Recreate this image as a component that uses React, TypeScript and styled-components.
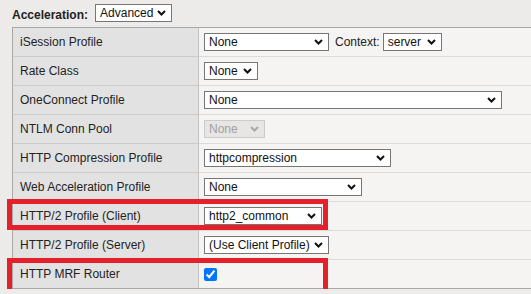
import styled, { createGlobalStyle } from "styled-components";

const GlobalStyle = createGlobalStyle`
  * { box-sizing: border-box; }
  body {
    margin: 0;
    background: #ecebea;
    font-family: "Liberation Sans", Arial, sans-serif;
    font-size: 12px;
    color: #222;
    overflow: hidden;
  }
`

const Page = styled.div`
  padding: 4px 0 0 12px;
  width: 600px;
`

const Header = styled.div`
  display: flex;
  align-items: flex-end;
  gap: 7px;
  height: 18px;
  margin-bottom: 5px;
`

const HeaderLabel = styled.span`
  font-weight: bold;
  line-height: 14px;
`

const Table = styled.div`
  border: 1px solid #a8a8a8;
  border-right: none;
  width: 580px;
`

const Row = styled.div`
  position: relative;
  display: grid;
  grid-template-columns: 186px 1fr;
  height: 29px;

  &:last-child {
    height: 28px;
  }
  &:last-child > div {
    border-bottom: none;
  }
`

const LabelCell = styled.div`
  display: flex;
  align-items: center;
  padding-left: 7px;
  background: #e2e2e2;
  border-right: 1px solid #c2c2c2;
  border-bottom: 1px solid #cbcbcb;
`

const ValueCell = styled.div`
  display: flex;
  align-items: center;
  padding-left: 5px;
  background: #f5f4f2;
  border-bottom: 1px solid #dcdbd9;
`

const SelectBox = styled.span<{ $width: number; $disabled?: boolean }>`
  display: inline-flex;
  align-items: center;
  justify-content: space-between;
  width: ${p => p.$width}px;
  height: 18px;
  padding: 0 5px 0 4px;
  background: ${p => (p.$disabled ? "#e7e6e5" : "#fff")};
  border: 1px solid ${p => (p.$disabled ? "#cbcbcb" : "#767676")};
  color: ${p => (p.$disabled ? "#a0a0a0" : "#111")};
  line-height: 14px;
  white-space: nowrap;
  overflow: hidden;

  svg {
    flex: none;
    stroke: ${p => (p.$disabled ? "#a8a8a8" : "#111")};
  }
`

const ContextLabel = styled.span`
  margin: 0 3px 0 6px;
`

const CheckBox = styled.input`
  margin: 0;
  width: 13px;
  height: 13px;
`

const Highlight = styled.div<{ $top: number }>`
  position: absolute;
  left: -6px;
  top: ${p => p.$top}px;
  width: 321px;
  height: 31px;
  border: 5px solid #e4202a;
  pointer-events: none;
`

function Chevron() {
  return (
    <svg width="9" height="6" viewBox="0 0 9 6" fill="none">
      <path d="M1 1 L4.5 4.5 L8 1" strokeWidth="2" />
    </svg>
  )
}

function Select({ value, width, disabled }: { value: string; width: number; disabled?: boolean }) {
  return (
    <SelectBox $width={width} $disabled={disabled}>
      <span>{value}</span>
      <Chevron />
    </SelectBox>
  )
}

export default function App() {
  return (
    <>
      <GlobalStyle />
      <Page>
        <Header>
          <HeaderLabel>Acceleration:</HeaderLabel>
          <Select value="Advanced" width={77} />
        </Header>
        <Table>
          <Row>
            <LabelCell>iSession Profile</LabelCell>
            <ValueCell>
              <Select value="None" width={125} />
              <ContextLabel>Context:</ContextLabel>
              <Select value="server" width={59} />
            </ValueCell>
          </Row>
          <Row>
            <LabelCell>Rate Class</LabelCell>
            <ValueCell><Select value="None" width={54} /></ValueCell>
          </Row>
          <Row>
            <LabelCell>OneConnect Profile</LabelCell>
            <ValueCell><Select value="None" width={298} /></ValueCell>
          </Row>
          <Row>
            <LabelCell>NTLM Conn Pool</LabelCell>
            <ValueCell><Select value="None" width={61} disabled /></ValueCell>
          </Row>
          <Row>
            <LabelCell>HTTP Compression Profile</LabelCell>
            <ValueCell><Select value="httpcompression" width={187} /></ValueCell>
          </Row>
          <Row>
            <LabelCell>Web Acceleration Profile</LabelCell>
            <ValueCell><Select value="None" width={158} /></ValueCell>
          </Row>
          <Row>
            <LabelCell>HTTP/2 Profile (Client)</LabelCell>
            <ValueCell><Select value="http2_common" width={118} /></ValueCell>
            <Highlight $top={-3} />
          </Row>
          <Row>
            <LabelCell>HTTP/2 Profile (Server)</LabelCell>
            <ValueCell><Select value="(Use Client Profile)" width={125} /></ValueCell>
          </Row>
          <Row>
            <LabelCell>HTTP MRF Router</LabelCell>
            <ValueCell><CheckBox type="checkbox" checked readOnly /></ValueCell>
            <Highlight $top={-2} />
          </Row>
        </Table>
      </Page>
    </>
  )
}
